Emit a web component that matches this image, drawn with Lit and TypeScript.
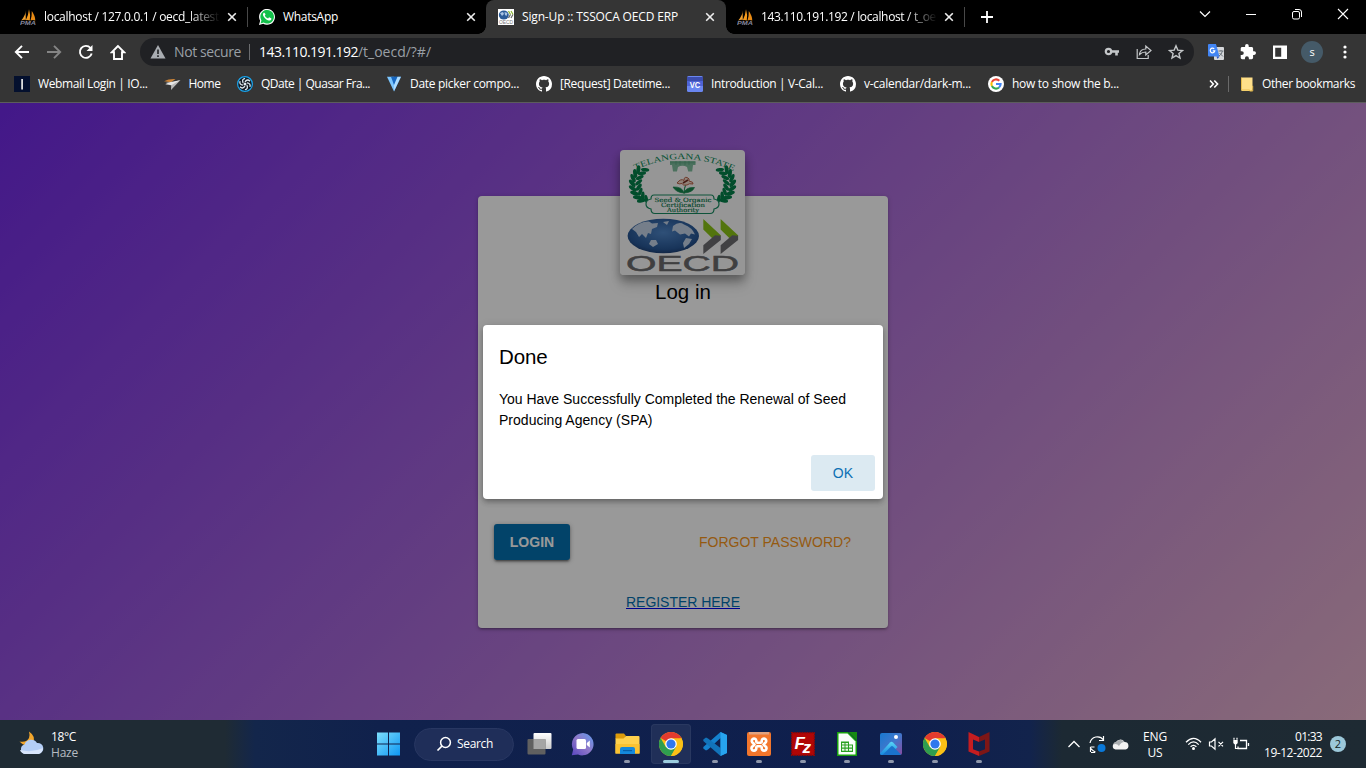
import { LitElement, html, css, svg } from "lit";
import { customElement, property } from "lit/decorators.js";

/** Single-line label whose tracking is tuned so that it spans `w` pixels. */
@customElement("fit-label")
class FitLabel extends LitElement {
  static styles = css`
    :host { display: inline-block; white-space: pre; flex: none; }
  `;
  @property() text = "";
  @property({ type: Number }) w = 0;
  render() {
    return html`<span>${this.text}</span>`;
  }
  updated() {
    const s = this.renderRoot.querySelector("span") as HTMLElement;
    s.style.letterSpacing = "0px";
    const natural = s.getBoundingClientRect().width;
    if (this.w && natural) s.style.letterSpacing = (this.w - natural) / this.text.length + "px";
  }
}

const t = (text: string, w: number) => html`<fit-label .text=${text} .w=${w}></fit-label>`;

const pma = svg`<svg width="16" height="16" viewBox="0 0 16 16">
  <path d="M5.600 1.500Q5.800 6 1.200 11.500Q4 10.400 5.800 11Z" fill="#f0a030"/>
  <path d="M9 .3Q10.800 6 9.800 11.500Q7.500 10.500 5.800 11.300Q8.500 6 9 .3Z" fill="#f59a1c"/>
  <path d="M11.800 2Q15.300 7 15.300 11.500Q12.500 10.500 10.500 11.500Q12 7 11.800 2Z" fill="#e88a14"/>
  <text x="0" y="15.700" font-family="Liberation Sans" font-weight="700" font-style="italic" font-size="6" textLength="16" lengthAdjust="spacingAndGlyphs" fill="#85879c">PMA</text>
</svg>`;

const whatsapp = svg`<svg width="16" height="16" viewBox="0 0 24 24">
  <path d="M0 24l1.700-6.200A11.900 11.900 0 1 1 6.300 22.300Z" fill="#fff"/>
  <path d="M2.300 21.700l1.300-4.600A10.200 10.200 0 1 1 7 20.400Z" fill="#12c04a"/>
  <path d="M8.600 6.300c-.5-.9-1-.7-1.500-.5C5.700 6.900 5.600 9 6.700 10.800c2 3.300 4.500 5.600 7.900 6.500 2.300.5 4-1 4-2.700 0-.6-.1-.7-2.900-2-.6-.3-.8.200-1.700 1.300-.4.400-.7.300-1.200.1-2-.9-3.200-2.200-4-3.700-.3-.6.700-1.100 1-1.900.1-.4-.5-1.500-1.200-2.100Z" fill="#fff"/>
</svg>`;

const oecdMini = svg`<svg width="16" height="16" viewBox="0 0 16 16">
  <rect width="16" height="16" fill="#fff"/><ellipse cx="5.800" cy="6" rx="5" ry="4.600" fill="#2a5b98"/>
  <path d="M2 4l3-1 1 2-2 2zM6.500 3l3 1-1 3-1.500-1z" fill="#a9c4e4"/>
  <path d="M10.500 2l2 3.500M13 2l2 3.500" stroke="#8ab52c" stroke-width="1.200"/><path d="M12.500 5.500l-2 3.500M15 5.500l-2 3.500" stroke="#666" stroke-width="1.200"/>
  <text x="1" y="15.300" font-family="Liberation Sans" font-size="5.200" textLength="14" lengthAdjust="spacingAndGlyphs" fill="#777">OECD</text>
</svg>`;

const closeX = svg`<svg width="10" height="10" viewBox="0 0 10 10"><path d="M1.200 1.200l7.600 7.600M8.800 1.200L1.200 8.800" stroke="#eee" stroke-width="1.600"/></svg>`;

const github = svg`<svg width="16" height="16" viewBox="0 0 16 16"><path fill="#fff" d="M8 0C3.580 0 0 3.580 0 8c0 3.540 2.290 6.530 5.470 7.590.4.070.55-.17.55-.38 0-.19-.01-.82-.01-1.490-2.010.37-2.530-.49-2.690-.94-.09-.23-.48-.94-.82-1.130-.28-.15-.68-.52-.01-.53.63-.01 1.080.58 1.230.82.72 1.210 1.870.87 2.330.66.07-.52.28-.87.51-1.070-1.780-.2-3.640-.89-3.640-3.950 0-.87.31-1.590.82-2.150-.08-.2-.36-1.020.08-2.120 0 0 .67-.21 2.200.82.64-.18 1.320-.27 2-.27s1.360.09 2 .27c1.530-1.040 2.200-.82 2.200-.82.44 1.100.16 1.920.08 2.120.51.56.82 1.270.82 2.150 0 3.070-1.870 3.750-3.650 3.950.29.25.54.73.54 1.480 0 1.070-.01 1.930-.01 2.200 0 .21.15.46.55.38A8.010 8.010 0 0 0 16 8c0-4.420-3.580-8-8-8Z"/></svg>`;

const webmail = svg`<svg width="16" height="16" viewBox="0 0 16 16"><rect width="16" height="16" fill="#04102e"/><rect x="7.200" y="3" width="1.800" height="10.500" fill="#ddd"/></svg>`;
const home2 = svg`<svg width="17" height="16" viewBox="0 0 17 16"><path d="M0 5.200Q5 2.500 11.500 3L7 6.200Z" fill="#c98338"/><path d="M1 8.500L16.500 4 7 14 7.200 9.200Z" fill="#b9b9b9"/><path d="M7.200 9.300L16 4.300 1.500 7Z" fill="#e7e7e7"/></svg>`;
const quasar = svg`<svg width="16" height="16" viewBox="0 0 16 16"><circle cx="8" cy="8" r="7.400" fill="#10181f" stroke="#1ba4ec" stroke-width="1.200"/>
  <g fill="none" stroke="#dfe9ef" stroke-width="1.300">${[0, 60, 120, 180, 240, 300].map(a => svg`<path d="M8 5.800Q10.500 2.500 13 5.200" transform="rotate(${a} 8 8)"/>`)}</g><circle cx="8" cy="8" r="1.500" fill="#dfe9ef"/></svg>`;
const vuetify = svg`<svg width="16" height="16" viewBox="0 0 16 16"><path d="M1 .8h7L8 15.500Z" fill="#7bc6ff"/><path d="M8 .8h7L8 15.500Z" fill="#1a78d2"/><path d="M5 .8h6.500L8 9Z" fill="#1867c0"/><path d="M11.500 .8H15L8 15.500V9Z" fill="#aeddff"/></svg>`;
const vcal = svg`<svg width="16" height="16" viewBox="0 0 16 16"><rect y="0" width="16" height="16" rx="1.500" fill="#6a86f0"/><rect y="1" width="16" height="4" fill="#3c4dae"/><rect y="5" width="16" height="5" fill="#4e63d6"/><text x="2.800" y="12" font-family="Liberation Sans" font-weight="700" font-size="9" textLength="10.500" lengthAdjust="spacingAndGlyphs" fill="#fff">VC</text></svg>`;
const google = svg`<svg width="16" height="16" viewBox="0 0 16 16"><circle cx="8" cy="8" r="8" fill="#fff"/><g fill="none" stroke-width="2.100">
  <path d="M11.300 4.800A4.600 4.600 0 0 0 3.900 5.900" stroke="#ea4335"/><path d="M3.900 5.900A4.600 4.600 0 0 0 3.900 10.100" stroke="#fbbc05"/><path d="M3.900 10.100A4.600 4.600 0 0 0 11 11.500" stroke="#34a853"/><path d="M11 11.500A4.600 4.600 0 0 0 12.600 8H8" stroke="#4285f4"/></g></svg>`;
const folderMini = svg`<svg width="14" height="16" viewBox="0 0 14 16"><path d="M1.500 1.500h11v10l-.8 3.500H1.500Z" fill="#ffe08a"/><path d="M1.500 1.500v12.500h8.200v1h3V9.800" fill="none" stroke="#e8bd4d"/></svg>`;

const logo = () => {
  // Leaf pairs along the left stem, from the banner up to the tip.
  const leaves = Array.from({ length: 8 }, (_, i) => {
    const a = ((-128 - i * 15.500) * Math.PI) / 180;
    const x = 33 + 17 * Math.cos(a), y = 34 + 18 * Math.sin(a);
    const d = (a * 180) / Math.PI;
    return svg`<ellipse cx=${x - 2.600} cy=${y - 1.600} rx="4.500" ry="2" transform="rotate(${d + 45} ${x - 2.600} ${y})"/>
      <ellipse cx=${x + 2.600} cy=${y} rx="4.200" ry="1.800" transform="rotate(${d - 45} ${x + 2.600} ${y})"/>`;
  });
  return html`<svg class="logo" width="125" height="125" viewBox="0 0 125 125">
    <defs><path id="arc" d="M15 20Q62.500 -2 111 20"/>
      <radialGradient id="sea" cx=".5" cy=".4" r=".65"><stop offset="0" stop-color="#4f86c8"/><stop offset=".75" stop-color="#285795"/><stop offset="1" stop-color="#1a3868"/></radialGradient>
      <g id="wreath" fill="#04804a">${leaves}</g></defs>
    <rect width="125" height="125" fill="#fbfbfb"/>
    <text font-family="Liberation Serif" font-size="8.300" fill="#0b8a58"><textPath href="#arc" textLength="102" lengthAdjust="spacingAndGlyphs">TELANGANA STATE</textPath></text>
    <g fill="#7fbd9d"><path d="M50 11h25.500v4H73l-.8 6.500h-4L67 17q-4.500-2.500-9 0l-1 4.500h-4L52 15h-2z"/><path d="M50 12.800h25.500M56 11v4M60 11v4M65 11v4M69 11v4" stroke="#4f9f79" stroke-width=".6"/></g>
    <use href="#wreath"/><use href="#wreath" transform="translate(125 0) scale(-1 1)"/>
    <path d="M64 43q-1.500-6.500-11-6 3 5.500 11 6 1.500-6 10.500-5.500-2 5-10.500 5.500M64 44q0-7 2-10" fill="#16864d" stroke="#16864d" stroke-width=".7"/>
    <path d="M57 33q4-5 7-2.500 0-4 3-3 3 1 2 3.500 5 1 4 3-4-1-6 1-4 1-5-1.500-3 1-5-.5" fill="#f0d8c8" stroke="#ba6048" stroke-width="1"/><path d="M63 33l5-3" stroke="#762f26" stroke-width="1.500"/>
    <path d="M34 45H91q3 0 3 4 5 1 5 5t-5 5q0 4.500-4 4.500H35q-4 0-4-4.500-5-1-5-5t5-5q0-4 3-4Z" fill="#fbfbfb" stroke="#188b61" stroke-width="1.200"/>
    <g font-family="DejaVu Serif" font-size="5.800" fill="#08774b" stroke="#08774b" stroke-width=".15" text-anchor="middle">
      <text x="63" y="51.800" textLength="57" lengthAdjust="spacingAndGlyphs">Seed &amp; Organic</text>
      <text x="63" y="56.900" textLength="44" lengthAdjust="spacingAndGlyphs">Certification</text>
      <text x="63" y="61.900" textLength="32" lengthAdjust="spacingAndGlyphs">Authority</text></g>
    <ellipse cx="43.300" cy="86" rx="35.700" ry="17.200" fill="url(#sea)"/>
    <g fill="#c3d3e6"><path d="M12 79q8-8 17-7.500l3 2 6-.5-1 4-5 2-1 5-3-1-2 5-4-4-3 3-3-5Z"/><path d="M53 76q6-5 11-1.500 8 3 11 10l-4-1-2 3-4-3-5 1-5-4-3 1Z"/><path d="M31 90l5 0 2 4-5 3-4-3Z"/><path d="M66 88l6 1-3 5-5 4-1-5Z"/><path d="M43 72l6-1-2 4Z"/></g>
    ${[0, 17.300].map(dx => svg`<g transform="translate(${dx} 0)"><path d="M83.300 69L101 85.500l-3.500 3.500-5-.5L83.300 79.500Z" fill="#8ac417"/><path d="M100.800 85.800V90L83.300 104V95.300L95 85.300Z" fill="#6d6d70"/></g>`)}
    <text x="6" y="120.500" font-family="Liberation Sans" font-size="21.500" textLength="113" lengthAdjust="spacingAndGlyphs" fill="#6a6a6c" stroke="#6a6a6c" stroke-width=".5">OECD</text>
  </svg>`;
};

const chrome = svg`<svg width="24" height="24" viewBox="0 0 24 24"><circle cx="12" cy="12" r="12" fill="#fbc116"/>
  <path d="M12 12L1.600 6A12 12 0 0 1 22.400 6Z" fill="#e33b2e"/><path d="M12 6.200H22.500L20 4 12 0Z" fill="#e33b2e"/>
  <path d="M1.600 6A12 12 0 0 0 12 24L17.200 15 12 12 6.800 15Z" fill="#2f9e4f"/><path d="M12 24A12 12 0 0 0 22.400 6.200H12V12l5.200 3Z" fill="#fbc116"/>
  <circle cx="12" cy="12" r="5.800" fill="#fff"/><circle cx="12" cy="12" r="4.600" fill="#2f78ee"/></svg>`;
const winLogo = svg`<svg width="24" height="24" viewBox="-.5 0 24 24"><defs><linearGradient id="w" x2="24" y2="24" gradientUnits="userSpaceOnUse"><stop stop-color="#7fe0fd"/><stop offset="1" stop-color="#0c95f2"/></linearGradient></defs><path d="M.5.5h11v11H.5zM12.500.5h11v11h-11zM.5 12.500h11v11H.5zM12.500 12.500h11v11h-11z" fill="url(#w)"/></svg>`;
const taskView = svg`<svg width="25" height="24" viewBox="0 0 25 24"><defs><linearGradient id="tv" x2="0" y2="1"><stop stop-color="#fff"/><stop offset="1" stop-color="#ccc"/></linearGradient></defs><rect x="6.500" y="1" width="18" height="16" rx="1" fill="url(#tv)"/><rect x=".5" y="7" width="18" height="15.500" rx="1" fill="#606060"/><path d="M6.500 7h12v10h-12z" fill="#a5a5a5"/></svg>`;
const chat = svg`<svg width="24" height="24" viewBox="0 0 24 24"><defs><linearGradient id="ch" x1="1" x2="0" y2="1"><stop stop-color="#5f9cf0"/><stop offset=".5" stop-color="#8f78c8"/><stop offset="1" stop-color="#5946c0"/></linearGradient></defs><path d="M12 1A11.200 11.200 0 1 1 7 22.500L.8 23.200 2.200 17.500A11.200 11.200 0 0 1 12 1Z" fill="url(#ch)"/><rect x="5.500" y="7" width="9.500" height="10" rx="1.500" fill="#fff"/><path d="M15.800 11l3-2.500v7l-3-2.500z" fill="#fff"/></svg>`;
const explorer = svg`<svg width="25" height="24" viewBox="0 0 25 24"><path d="M.5 2.500q0-1 1-1H9l2 2.500-2 3H.5Z" fill="#dd9b0b"/><path d="M.5 6.500h8L11 4h12.500q1 0 1 1v16.500H.5Z" fill="#ffd14d"/><path d="M.5 12h24v9.500H.5z" fill="#fac231"/><path d="M5 22v-5q0-2 2-2h11q2 0 2 2v5Z" fill="#1489dc"/><path d="M8 18h9v1.200H8z" fill="#075fa8"/></svg>`;
const vscode = svg`<svg width="24" height="24" viewBox="0 0 24 24"><path d="M17.500 0L24 3v18l-6.500 3V6L5 17.500 3 18.500.3 16.500V15Z" fill="#1481ce"/><path d="M17.500 24L.3 9V7.500L3 5.600 5 6.500 17.500 16Z" fill="#1273ba"/><path d="M17.500 0L24 3v18l-6.500 3Z" fill="#27a4ef"/></svg>`;
const xampp = svg`<svg width="24" height="24" viewBox="0 0 24 24"><rect width="24" height="24" rx="2" fill="#f3762c"/><path d="M2 0h20v2.500H2z" fill="#e2a27f"/><path d="M9.300 10.800h5.400M9.300 14.200h5.400M9.300 10.800V8.500A2.300 2.300 0 1 0 6 11l1.500 1.500L6 14a2.400 2.400 0 1 0 3.300 2.500v-2.300M14.700 10.800V8.500A2.300 2.300 0 1 1 18 11l-1.500 1.500L18 14a2.400 2.400 0 1 1-3.300 2.500v-2.300" fill="none" stroke="#fff" stroke-width="2.600" stroke-linejoin="round"/></svg>`;
const filezilla = svg`<svg width="24" height="24" viewBox="0 0 24 24"><rect x=".7" y=".7" width="22.600" height="22.600" fill="#b00606" stroke="#8f0606" stroke-width="1.400" stroke-dasharray="1.500 1"/><text x="3.500" y="17" font-family="Liberation Sans" font-weight="700" font-style="italic" font-size="17" fill="#fff">F</text><text x="11.500" y="20.500" font-family="Liberation Sans" font-weight="700" font-style="italic" font-size="17" fill="#fff">z</text></svg>`;
const calc = svg`<svg width="20" height="24" viewBox="0 0 20 24"><path d="M0 0h11L20 9v15H0Z" fill="#17a10d"/><path d="M1.500 1.500h9L18.500 9.500v13h-17Z" fill="#fafffa"/><path d="M11.500 0H20v8.500Z" fill="#178a12"/><path d="M4 9.500h8v3h4v7.500H4Z" fill="#28a020"/><path d="M5 11h2.500v1.500H5zM8.500 11H11v1.500H8.500zM5 13.600h2.500v2H5zM8.500 13.600H11v2H8.500zM12 13.600h3v2h-3zM5 16.800h2.500v2H5zM8.500 16.800H11v2H8.500zM12 16.800h3v2h-3z" fill="#e8f8e6"/></svg>`;
const photos = svg`<svg width="24" height="24" viewBox="0 0 24 24"><defs><linearGradient id="p1" x2="1" y2="1"><stop stop-color="#1878ce"/><stop offset=".5" stop-color="#3f77cc"/><stop offset="1" stop-color="#8a4ba0"/></linearGradient><linearGradient id="p2" x2="0" y2="1"><stop stop-color="#58d6f8"/><stop offset="1" stop-color="#1687de"/></linearGradient></defs><rect x="1" y="1" width="22" height="22" rx="2" fill="url(#p1)"/><path d="M1 21.500L11 10.500q1.500-1.500 3 0l4.500 4.500L11 23H3q-2 0-2-1.500Z" fill="url(#p2)"/><path d="M3.500 23L12 14.500q1-1 2 0l8 8-1 .5Z" fill="#1a73cc"/><circle cx="17" cy="5" r="2" fill="#fff"/></svg>`;
const mcafee = svg`<svg width="24" height="24" viewBox="0 0 24 24"><path d="M1.500 0L12 5v5L6 7.500v9.800l6 2.200V24L1.500 19.500Z" fill="#c51d20"/><path d="M22.500 0L12 5v5l6-2.500v9.800l-6 2.200V24l10.500-4.500Z" fill="#7e1616"/></svg>`;

@customElement("app-root")
class AppRoot extends LitElement {
  static styles = css`
    :host { display: flex; flex-direction: column; width: 1366px; height: 768px; overflow: hidden; font: 12px/16px "Open Sans", "Noto Sans", sans-serif; color: #fff; }
    * { box-sizing: border-box; }
    svg { display: block; flex: none; }
    .row, .tabs, .tool, .marks, .omni, .tray, .pins { display: flex; align-items: center; }
    .tabs { height: 34px; background: #000; padding-left: 8px; flex: none; }
    .tab { width: 239px; height: 34px; display: flex; align-items: center; padding: 0 11px 0 12px; flex: none; }
    .tab .title { width: 175px; margin-left: 8px; height: 16px; flex: none; }
    .fade { -webkit-mask-image: linear-gradient(90deg, #000 145px, transparent 176px); mask-image: linear-gradient(90deg, #000 145px, transparent 176px); }
    .tab .x { margin-left: 8px; }
    .bar { width: 1px; height: 20px; background: #484848; flex: none; }
    .tab .bar { margin-left: 10px; }
    .on { background: #353535; border-radius: 8px 8px 0 0; width: 240px; margin-right: -1px; position: relative; }
    .on::before, .on::after { content: ""; position: absolute; bottom: 0; width: 8px; height: 8px; }
    .on::before { left: -8px; background: radial-gradient(circle at 0 0, transparent 7.500px, #353535 8px); }
    .on::after { right: -8px; background: radial-gradient(circle at 100% 0, transparent 7.500px, #353535 8px); }
    .plus { margin-left: 16px; }
    .win { margin-left: auto; display: flex; gap: 34px; padding: 0 17px 6px 0; }
    .tool { height: 36px; background: #353535; padding: 0 14px; flex: none; }
    .nav { display: flex; gap: 16px; width: 126px; flex: none; align-items: center; }
    .omni { width: 1054px; height: 28px; border-radius: 14px; background: #202124; padding: 0 10px; font-size: 14px; line-height: 20px; color: #9aa0a6; flex: none; }
    .omni svg { margin-right: 8px; }
    .omni .bar { background: #6b6c6f; margin: 0 9px 0 8px; height: 16px; }
    .omni .host { color: #fff; }
    .omni .acts { margin-left: auto; display: flex; gap: 16px; align-items: center; }
    .omni .acts svg { margin: 0; }
    .ext { display: flex; align-items: center; gap: 16px; margin-left: 14px; }
    .av { width: 22px; height: 22px; border-radius: 50%; background: #455a68; font-size: 11px; text-align: center; line-height: 21px; margin: 0 -2px 0 -3px; }
    .marks { height: 32px; background: #353535; padding: 0 11px 5px 14px; flex: none; }
    .mark { display: flex; align-items: center; gap: 8px; flex: none; }
    .more { margin-left: auto; display: flex; align-items: center; }
    .more .bar { background: #6a6a6a; height: 16px; margin: 0 11px 0 9px; }
    .line { height: 1px; background: #5c5c5c; flex: none; }

    .page { flex: none; height: 617px; position: relative; background: linear-gradient(135deg, #7028e4 0%, #e5b2ca 100%); font: 14px/21px "Liberation Sans", Arial, sans-serif; color: #000; }
    .card { width: 410px; height: 432px; margin: 0 auto; background: #fff; border-radius: 4px; display: flex; flex-direction: column; box-shadow: 0 1px 5px rgba(0,0,0,.2), 0 2px 2px rgba(0,0,0,.14), 0 3px 1px -2px rgba(0,0,0,.12); }
    .wrap { padding-top: 93px; }
    .logo { margin: -46px 0 0 142px; border-radius: 4px; box-shadow: 0 5px 10px rgba(0,0,0,.32), 0 10px 14px rgba(0,0,0,.15); }
    .h6 { font-size: 20.500px; line-height: 32px; }
    .card .h6 { text-align: center; margin-top: 1px; }
    .acts2 { margin: auto 37px 0 16px; display: flex; justify-content: space-between; align-items: center; }
    .login { width: 76px; height: 36px; line-height: 36px; border-radius: 3px; background: #0471b0; color: #fff; font-weight: 700; text-align: center; box-shadow: 0 1px 5px rgba(0,0,0,.3), 0 2px 2px rgba(0,0,0,.25), 0 3px 1px -2px rgba(0,0,0,.2); }
    .forgot { color: #f8961c; }
    .reg { margin: 32px auto 16px; color: #0471b0; text-decoration: underline #0000ee; height: 20px; line-height: 20px; }
    .reg fit-label { display: inline; }
    .veil { position: absolute; inset: 0; background: rgba(0,0,0,.4); display: flex; align-items: center; justify-content: center; }
    .dialog { width: 400px; height: 174px; background: #fff; border-radius: 4px; display: flex; flex-direction: column; padding: 16px 8px 8px 16px; margin-top: 1px; box-shadow: 0 2px 4px -1px rgba(0,0,0,.2), 0 4px 5px rgba(0,0,0,.14), 0 1px 10px rgba(0,0,0,.12); }
    .body { margin-top: 16px; display: flex; flex-direction: column; }
    .ok { margin: auto 0 0 auto; width: 64px; height: 36px; line-height: 36px; border-radius: 3px; background: #dceaf2; color: #0c70b4; text-align: center; }

    .task { height: 48px; flex: none; display: flex; align-items: center; background: linear-gradient(90deg, #1f2b34 0, #1f2b34 225px, #13264b 255px, #10214c 380px, #0f1f4d 900px, #12234c 1030px, #1c2933 1062px, #1e2a33 100%); }
    .wx { width: 366px; padding-left: 19px; display: flex; align-items: center; gap: 7px; flex: none; }
    .wx svg { margin-top: -2px; }
    .dim { color: #b6bcc2; }
    .stack { display: flex; flex-direction: column; margin-top: 2px; }
    .pin { width: 44px; height: 48px; flex: none; display: flex; flex-direction: column; align-items: center; padding-top: 12px; }
    .pin i { width: 6px; height: 3px; border-radius: 2px; background: #8e97ab; margin-top: 4px; }
    .pin.cur { width: 40px; height: 40px; margin: 0 2px; padding-top: 8px; border-radius: 4px; background: #202f58; box-shadow: inset 0 0 0 1px #293860; }
    .pin.cur i { width: 16px; background: #9ccddf; }
    .search { width: 100px; height: 33px; border-radius: 17px; background: #1f2e59; border: 1px solid #283762; margin: 0 3px 0 4px; display: flex; align-items: center; gap: 5px; padding-left: 21px; flex: none; }
    .tray { margin-left: auto; padding-right: 20px; flex: none; }
    .sync { margin-left: 5px; }
    .cloud { margin-left: 2px; }
    .mute { margin-left: 6px; }
    .batt { margin-left: 7px; }
    .lang { width: 34px; align-items: center; margin: 2px 13px 0 9px; }
    .clock { align-items: flex-end; width: 64px; margin: 1px 8px 0 8px; }
    .badge { width: 16px; height: 16px; border-radius: 50%; background: #9cc8da; color: #122; font-size: 11px; line-height: 16px; text-align: center; }
  `;

  tab(icon: unknown, text: string, w: number, opt: { on?: boolean; bar?: boolean; fade?: boolean } = {}) {
    return html`<div class="tab ${opt.on ? "on" : ""}">${icon}<div class="title ${opt.fade ? "fade" : ""}">${t(text, w)}</div>
      <div class="x">${closeX}</div>${opt.bar ? html`<div class="bar"></div>` : ""}</div>`;
  }

  mark(icon: unknown, text: string, w: number, total: number) {
    return html`<div class="mark" style="width:${total}px">${icon}${t(text, w)}</div>`;
  }

  pin(icon: unknown, dot = true, cur = false) {
    return html`<div class="pin ${cur ? "cur" : ""}">${icon}${dot ? html`<i></i>` : ""}</div>`;
  }

  render() {
    return html`
      <div class="tabs">
        ${this.tab(pma, "localhost / 127.0.0.1 / oecd_latest", 175, { fade: true, bar: true })}
        ${this.tab(whatsapp, "WhatsApp", 55)}
        ${this.tab(oecdMini, "Sign-Up :: TSSOCA OECD ERP", 156, { on: true })}
        ${this.tab(pma, "143.110.191.192 / localhost / t_oe", 175, { fade: true, bar: true })}
        <svg class="plus" width="14" height="14" viewBox="0 0 14 14"><path d="M7 1v12M1 7h12" stroke="#fff" stroke-width="1.800"/></svg>
        <div class="win">
          <svg width="12" height="12" viewBox="0 0 12 12"><path d="M1 3.500l5 5 5-5" fill="none" stroke="#fff" stroke-width="1.200"/></svg>
          <svg width="12" height="12" viewBox="0 0 12 12"><path d="M1 6.500h10" stroke="#fff"/></svg>
          <svg width="12" height="12" viewBox="0 0 12 12"><rect x="1.500" y="3.500" width="7" height="7.500" rx="1.500" fill="none" stroke="#fff"/><path d="M4 1.500h4q2.500 0 2.500 2.500v5" fill="none" stroke="#fff"/></svg>
          <svg width="12" height="12" viewBox="0 0 12 12"><path d="M1 1l10 10M11 1L1 11" stroke="#fff" stroke-width="1.100"/></svg>
        </div>
      </div>
      <div class="tool">
        <div class="nav">
          <svg width="16" height="16" viewBox="0 0 16 16"><path d="M15 8H2M8 1.800L1.800 8 8 14.200" fill="none" stroke="#fff" stroke-width="1.900"/></svg>
          <svg width="16" height="16" viewBox="0 0 16 16"><path d="M1 8h13M8 1.800L14.200 8 8 14.200" fill="none" stroke="#858585" stroke-width="1.900"/></svg>
          <svg width="16" height="16" viewBox="0 0 16 16"><path d="M13.700 9.500A6 6 0 1 1 12.500 4" fill="none" stroke="#fff" stroke-width="1.900"/><path d="M14.500 1v6h-6z" fill="#fff"/></svg>
          <svg width="16" height="17" viewBox="0 0 16 17"><path d="M8 2L1.700 8.300H4V15h8V8.300h2.300Z" fill="none" stroke="#fff" stroke-width="1.900"/></svg>
        </div>
        <div class="omni">
          <svg width="16" height="16" viewBox="0 0 16 16"><path d="M8 1L15.500 14.500H.5Z" fill="#a9adb2"/><path d="M8 5.500v4.500M8 11.200v1.800" stroke="#202124" stroke-width="1.600"/></svg>
          ${t("Not secure", 67)}<div class="bar"></div><span class="host">${t("143.110.191.192", 99)}</span>${t("/t_oecd/?#/", 73)}
          <div class="acts">
            <svg width="16" height="16" viewBox="0 0 16 16"><circle cx="4.500" cy="7.500" r="2.700" fill="none" stroke="#c4c7c9" stroke-width="2.200"/><path d="M7.500 7.500H15M12.500 7.500v4" stroke="#c4c7c9" stroke-width="2.600"/></svg>
            <svg width="16" height="16" viewBox="0 0 16 16"><path d="M1.200 5v9.500h11V11M3.500 10.500Q4 5 9.800 5V2L15 6.500 9.800 11V8Q6 8 3.500 10.500Z" fill="none" stroke="#c4c7c9" stroke-width="1.200"/></svg>
            <svg width="16" height="16" viewBox="0 0 16 16"><path d="M8 1.800l1.800 4.300 4.700.4-3.600 3 1.100 4.600L8 11.600l-4 2.500 1.100-4.600-3.600-3 4.700-.4Z" fill="none" stroke="#c4c7c9" stroke-width="1.400"/></svg>
          </div>
        </div>
        <div class="ext">
          <svg width="16" height="16" viewBox="0 0 16 16"><rect x="6" y="3" width="10" height="13" rx="1" fill="#d6d8db"/><path d="M0 1q0-1 1-1h7l3.500 12.500H1q-1 0-1-1Z" fill="#4285f4"/><path d="M8.500 12.500h3L9.500 15Z" fill="#2a56c6"/><path d="M6.200 4.900A2.300 2.300 0 1 0 6.800 6.900H4.800" fill="none" stroke="#fff" stroke-width="1.200"/><path d="M10.500 7h5M13 6v1M14.500 7q-1 3.500-3.500 5M11.500 9l3.500 3.500" stroke="#6c757d" fill="none"/></svg>
          <svg width="16" height="16" viewBox="1 1 22 22"><path fill="#fff" d="M20.500 11H19V7c0-1.100-.9-2-2-2h-4V3.500a2.500 2.500 0 0 0-5 0V5H4c-1.100 0-2 .9-2 2v3.800h1.500a2.700 2.700 0 0 1 0 5.400H2V20c0 1.100.9 2 2 2h3.800v-1.500a2.700 2.700 0 0 1 5.400 0V22H17c1.100 0 2-.9 2-2v-4h1.500a2.500 2.500 0 0 0 0-5z"/></svg>
          <svg width="16" height="16" viewBox="0 0 16 16"><path d="M1 1.500h14v13.500H1zM3.200 3.800v9h6v-9z" fill="#fff" fill-rule="evenodd"/></svg>
          <div class="av">s</div>
          <svg width="16" height="16" viewBox="0 0 16 16"><circle cx="8" cy="3" r="1.600" fill="#fff"/><circle cx="8" cy="8" r="1.600" fill="#fff"/><circle cx="8" cy="13" r="1.600" fill="#fff"/></svg>
        </div>
      </div>
      <div class="marks">
        ${this.mark(webmail, "Webmail Login | IO...", 109.500, 149.500)}
        ${this.mark(home2, "Home", 32, 73.500)}
        ${this.mark(quasar, "QDate | Quasar Fra...", 109, 149)}
        ${this.mark(vuetify, "Date picker compo...", 109, 150)}
        ${this.mark(github, "[Request] Datetime...", 110, 151)}
        ${this.mark(vcal, "Introduction | V-Cal...", 112, 153)}
        ${this.mark(github, "v-calendar/dark-m...", 107, 148)}
        ${this.mark(google, "how to show the b...", 107, 132)}
        <div class="more">
          <svg width="10" height="10" viewBox="0 0 10 10"><path d="M1 1.500L4.300 5 1 8.500M5.300 1.500L8.600 5 5.300 8.500" fill="none" stroke="#fff" stroke-width="1.600"/></svg>
          <div class="bar"></div>
          <div class="mark">${folderMini}${t("Other bookmarks", 93)}</div>
        </div>
      </div>
      <div class="line"></div>

      <div class="page">
        <div class="wrap">
          <div class="card">
            ${logo()}
            <div class="h6">${t("Log in", 56)}</div>
            <div class="acts2"><div class="login">${t("LOGIN", 44.500)}</div><div class="forgot">${t("FORGOT PASSWORD?", 152)}</div></div>
            <div class="reg">${t("REGISTER HERE", 114)}</div>
          </div>
        </div>
        <div class="veil">
          <div class="dialog">
            <div class="h6">${t("Done", 48.500)}</div>
            <div class="body">${t("You Have Successfully Completed the Renewal of Seed", 347)}${t("Producing Agency (SPA)", 153.500)}</div>
            <div class="ok">${t("OK", 20.500)}</div>
          </div>
        </div>
      </div>

      <div class="task">
        <div class="wx">
          <svg width="25" height="24" viewBox="0 0 25 24"><path d="M10 .5Q18 6 13.500 12.500 7 17.500.5 10.500 8 11.500 10 7 11 4 10 .5Z" fill="#f2a62c"/><path d="M6 23a5.500 5 0 0 1-.5-9.500A7 7 0 0 1 18 12a5.500 5.500 0 0 1 1.500 11Z" fill="#b4cef6"/><path d="M6 23q-4-1-5-4 12 3 23-2-.5 5-4.500 6Z" fill="#d8e5fb"/></svg>
          <div class="stack">${t("18°C", 25)}<span class="dim">${t("Haze", 27)}</span></div>
        </div>
        <div class="pins">
          ${this.pin(winLogo, false)}
          <div class="search"><svg width="16" height="16" viewBox="0 0 16 16"><circle cx="9.500" cy="6.500" r="4.900" fill="none" stroke="#fff" stroke-width="1.500"/><path d="M6 10L1.500 14.500" stroke="#fff" stroke-width="1.700"/></svg>${t("Search", 36)}</div>
          ${this.pin(taskView, false)}${this.pin(chat, false)}${this.pin(explorer)}${this.pin(chrome, true, true)}${this.pin(vscode)}${this.pin(xampp)}${this.pin(filezilla)}${this.pin(calc)}${this.pin(photos)}${this.pin(chrome)}${this.pin(mcafee)}
        </div>
        <div class="tray">
          <svg width="14" height="14" viewBox="0 0 14 14"><path d="M1.500 10L7 4.500 12.500 10" fill="none" stroke="#fff" stroke-width="1.300"/></svg>
          <svg class="sync" width="24" height="20" viewBox="0 0 24 20"><path d="M4 9A7.500 7.500 0 0 1 17.500 6M17.500 2v4.500h-4.500M9 18.500H5M4.500 13v5M4.500 13h4M5 14.500q2 3 4.500 3.500" fill="none" stroke="#fff" stroke-width="1.200"/><circle cx="15.500" cy="14" r="4" fill="#0a78d8"/></svg>
          <svg class="cloud" width="17" height="12" viewBox="0 0 17 12"><path d="M3.500 11.500A3.300 3.300 0 0 1 3.500 5 5 5 0 0 1 12.500 4 3.800 3.800 0 0 1 13.500 11.500Z" fill="#f2f2f2"/><path d="M1 6.500A4.500 4.500 0 0 1 5 3.500 5 5 0 0 1 12.500 4Q9 4 7 8 5 5 1 6.500Z" fill="#a9adb0"/></svg>
          <div class="stack lang">${t("ENG", 24)}${t("US", 15)}</div>
          <svg width="17" height="14" viewBox="0 0 17 14"><g fill="none" stroke="#fff" stroke-width="1.300"><path d="M1 5.300Q8.500-2.500 16 5.300M3.300 7.600Q8.500 2.300 13.700 7.600M5.600 9.800Q8.500 7 11.400 9.800"/></g><circle cx="8.500" cy="11.500" r="1.500" fill="#fff"/></svg>
          <svg class="mute" width="17" height="14" viewBox="0 0 17 14"><path d="M1.500 5H3.500L7 1.800V12.200L3.500 9H1.500ZM10.500 4.800l4.500 4.500M15 4.800L10.500 9.300" fill="none" stroke="#fff" stroke-width="1.200"/></svg>
          <svg class="batt" width="18" height="14" viewBox="0 0 18 14"><path d="M8 3.500h6.500v8H6V9.500M16.500 6v3" fill="none" stroke="#fff" stroke-width="1.300"/><path d="M1.300 3h4.400v3l-1 1.200H2.300L1.300 6Z" fill="#fff"/><path d="M2 .8v2M5 .8v2M3.500 7v4.500h2.500" fill="none" stroke="#fff" stroke-width="1.200"/></svg>
          <div class="stack clock">${t("01:33", 27)}${t("19-12-2022", 58)}</div>
          <div class="badge">2</div>
        </div>
      </div>
    `;
  }
}
